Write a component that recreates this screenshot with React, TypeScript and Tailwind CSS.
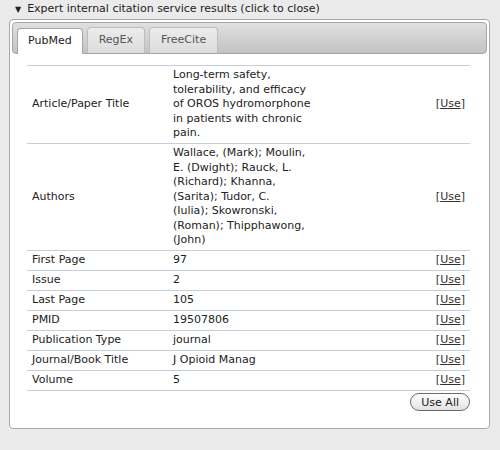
import React from 'react';

type Row = { label: string; value: string };

const rows: Row[] = [
    { label: 'Article/Paper Title', value: 'Long-term safety,\ntolerability, and efficacy\nof OROS hydromorphone\nin patients with chronic\npain.' },
    { label: 'Authors', value: 'Wallace, (Mark); Moulin,\nE. (Dwight); Rauck, L.\n(Richard); Khanna,\n(Sarita); Tudor, C.\n(Iulia); Skowronski,\n(Roman); Thipphawong,\n(John)' },
    { label: 'First Page', value: '97' },
    { label: 'Issue', value: '2' },
    { label: 'Last Page', value: '105' },
    { label: 'PMID', value: '19507806' },
    { label: 'Publication Type', value: 'journal' },
    { label: 'Journal/Book Title', value: 'J Opioid Manag' },
    { label: 'Volume', value: '5' },
];

const tabs = ['PubMed', 'RegEx', 'FreeCite'];

export default function App() {
    return (
        <div
            className="w-[500px] h-[450px] bg-[#ebebeb] text-[11px] text-[#222] overflow-hidden"
            style={{ fontFamily: '"DejaVu Sans", Verdana, sans-serif' }}
        >
            {/* Toggle header */}
            <div className="flex items-center h-[19px] pl-[15px] text-[#222]">
                <span className="text-[8px] mr-[6px] mt-[1px]">▼</span>
                <span>Expert internal citation service results (click to close)</span>
            </div>

            {/* Panel */}
            <div className="ml-[9px] w-[481px] h-[410px] bg-white border border-[#a9a9a9] rounded-[4px] p-[2px]">
                {/* Tab bar */}
                <div className="h-[32px] rounded-[4px] border border-[#a6a6a6] bg-gradient-to-b from-[#e0e0e0] to-[#c3c3c3] flex items-end pl-[4px] gap-[4px]">
                    {tabs.map((t, i) => (
                        <div
                            key={t}
                            className={
                                i === 0
                                    ? 'h-[26px] px-[10px] flex items-center bg-white border border-b-0 border-[#a6a6a6] rounded-t-[4px] text-[#222] -mb-px'
                                    : 'h-[26px] px-[11px] flex items-center bg-gradient-to-b from-[#ececec] to-[#dcdcdc] border border-b-0 border-[#bdbdbd] rounded-t-[4px] text-[#555]'
                            }
                        >
                            {t}
                        </div>
                    ))}
                </div>

                {/* Results table */}
                <div className="ml-[15px] mr-[17px] mt-[11px]">
                    <table className="w-full table-fixed border-collapse border-t border-[#c3d0dc]">
                        <colgroup>
                            <col className="w-[146px]" />
                            <col className="w-[150px]" />
                            <col />
                        </colgroup>
                        <tbody>
                            {rows.map((r) => (
                                <tr key={r.label} className="border-b border-[#c3d0dc]">
                                    <td className="pl-[5px] pt-[2px] pb-[2.5px] leading-[14.5px] align-middle">
                                        {r.label}
                                    </td>
                                    <td className="pt-[2px] pb-[2.5px] leading-[14.5px] align-middle whitespace-pre-line">
                                        {r.value}
                                    </td>
                                    <td className="pr-[5px] pt-[2px] pb-[2.5px] leading-[14.5px] text-right align-middle text-[#333]">
                                        [<span className="underline">Use</span>]
                                    </td>
                                </tr>
                            ))}
                        </tbody>
                    </table>
                    <div className="flex justify-end mt-[2px]">
                        <button className="h-[18px] px-[10px] rounded-full border border-[#6b6b6b] bg-gradient-to-b from-white to-[#e2e2e2] text-[11px] text-[#222] leading-none">
                            Use All
                        </button>
                    </div>
                </div>
            </div>
        </div>
    );
}
